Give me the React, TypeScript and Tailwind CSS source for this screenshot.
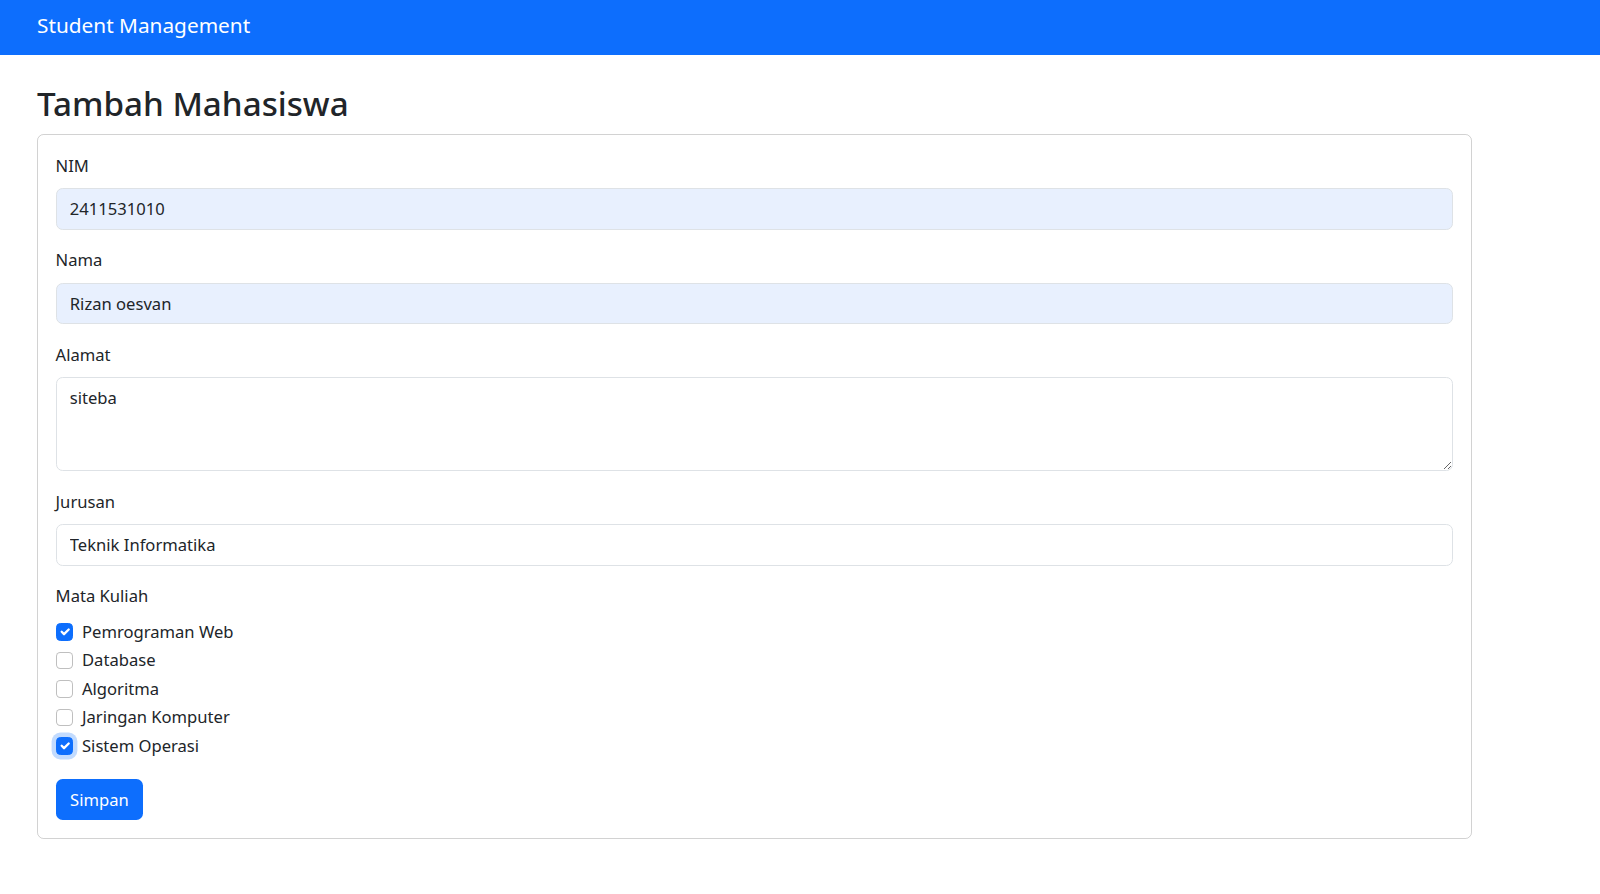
import React from "react";

const courses = [
  { name: "Pemrograman Web", checked: true, focus: false },
  { name: "Database", checked: false, focus: false },
  { name: "Algoritma", checked: false, focus: false },
  { name: "Jaringan Komputer", checked: false, focus: false },
  { name: "Sistem Operasi", checked: true, focus: true },
];

function Check({ checked, focus }: { checked: boolean; focus: boolean }) {
  if (checked) {
    return (
      <span
        className={
          "mt-[4.4px] flex h-[17.6px] w-[17.6px] shrink-0 items-center justify-center rounded-[4.4px] border border-[#0d6efd] bg-[#0d6efd]" +
          (focus ? " shadow-[0_0_0_4.4px_rgba(13,110,253,0.25)]" : "")
        }
      >
        <svg viewBox="0 0 20 20" className="h-[17.6px] w-[17.6px]">
          <path d="m6 10 3 3 6-6" fill="none" stroke="#fff" strokeWidth="3" strokeLinecap="round" strokeLinejoin="round" />
        </svg>
      </span>
    );
  }
  return <span className="mt-[4.4px] block h-[17.6px] w-[17.6px] shrink-0 rounded-[4.4px] border border-[rgba(0,0,0,0.25)] bg-white" />;
}

export default function App() {
  const inputBase =
    "block w-full h-[41.8px] rounded-[6.6px] border border-[#dee2e6] px-[13.2px] text-[16.6px] leading-[26.4px] text-[#212529] outline-none font-['Noto_Sans',sans-serif]";
  return (
    <div className="min-h-screen bg-white font-['Noto_Sans',sans-serif] text-[#212529]">
      <nav className="h-[55px] bg-[#0d6efd] px-[37px] pt-[10px]">
        <span className="text-[20.8px] leading-[30px] text-white">Student Management</span>
      </nav>
      <div className="px-[37px] pt-[28px]">
        <h2 className="mb-[9px] text-[33.2px] font-medium leading-[42.2px]">Tambah Mahasiswa</h2>
        <div className="w-[1435px] rounded-[6.6px] border border-[rgba(0,0,0,0.175)] p-[17.6px]">
          <div className="mb-[17.6px]">
            <label className="mb-[8.8px] block text-[16.6px] leading-[26.4px]">NIM</label>
            <input readOnly value="2411531010" className={inputBase + " bg-[#e8f0fe]"} />
          </div>
          <div className="mb-[17.6px]">
            <label className="mb-[8.8px] block text-[16.6px] leading-[26.4px]">Nama</label>
            <input readOnly value="Rizan oesvan" className={inputBase + " bg-[#e8f0fe]"} />
          </div>
          <div className="mb-[17.6px]">
            <label className="mb-[8.8px] block text-[16.6px] leading-[26.4px]">Alamat</label>
            <textarea
              readOnly
              value="siteba"
              rows={3}
              className="block h-[94px] w-full rounded-[6.6px] border border-[#dee2e6] bg-white px-[13.2px] py-[6.6px] text-[16.6px] leading-[26.4px] text-[#212529] outline-none font-['Noto_Sans',sans-serif]"
            />
          </div>
          <div className="mb-[17.6px]">
            <label className="mb-[8.8px] block text-[16.6px] leading-[26.4px]">Jurusan</label>
            <input readOnly value="Teknik Informatika" className={inputBase + " bg-white"} />
          </div>
          <div className="mb-[17.6px]">
            <label className="mb-[8.8px] block text-[16.6px] leading-[26.4px]">Mata Kuliah</label>
            <div className="flex flex-col">
              {courses.map((c) => (
                <div key={c.name} className="mb-[2.2px] flex min-h-[26.4px] items-start gap-[8.8px]">
                  <Check checked={c.checked} focus={c.focus} />
                  <span className="text-[16.6px] leading-[26.4px]">{c.name}</span>
                </div>
              ))}
            </div>
          </div>
          <button className="h-[41.2px] rounded-[6.6px] bg-[#0d6efd] px-[14.5px] text-[16.6px] leading-[26.4px] text-white">
            Simpan
          </button>
        </div>
      </div>
    </div>
  );
}
